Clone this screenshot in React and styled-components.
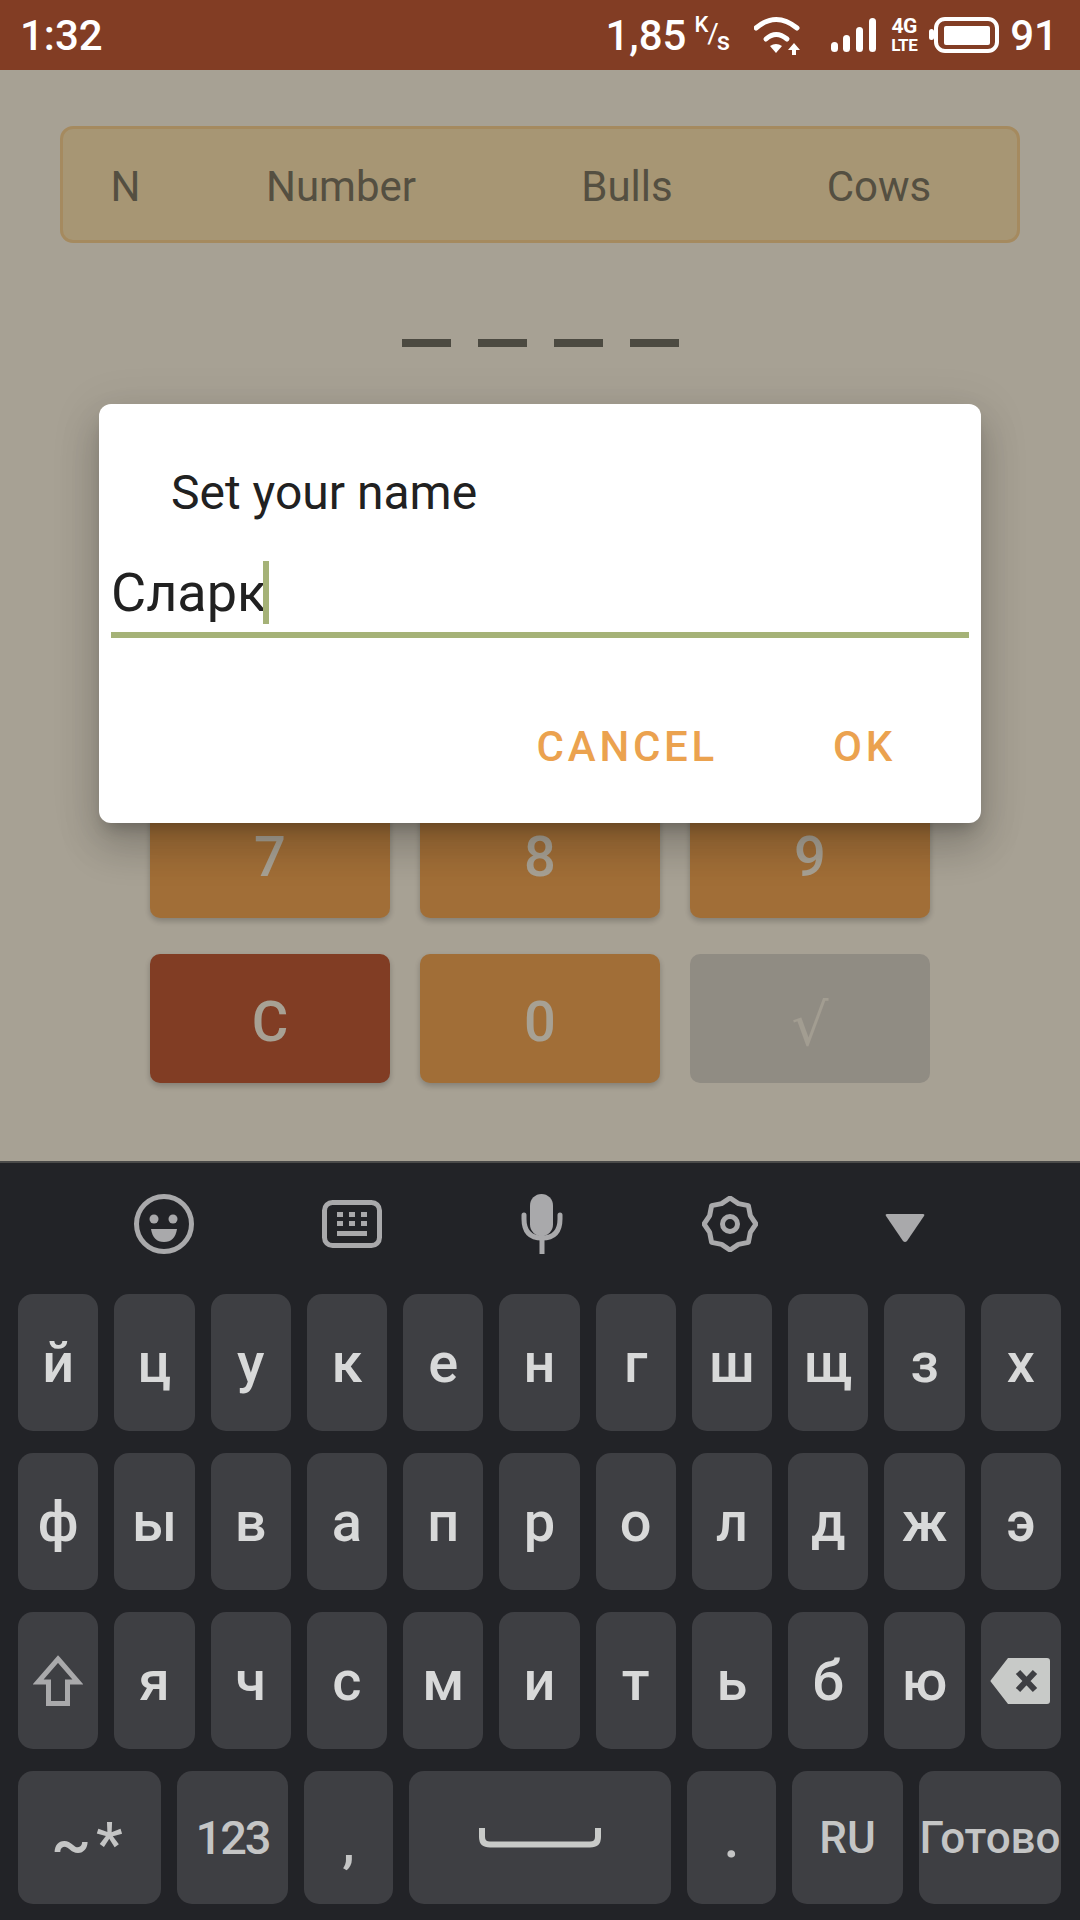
import React from "react";
import styled, { createGlobalStyle } from "styled-components";

const Global = createGlobalStyle`
  html, body { margin: 0; padding: 0; background: #222327; }
  * { box-sizing: border-box; }
  body { font-family: Roboto, "Noto Sans", sans-serif; }
`;

const Screen = styled.div`
  width: 1080px;
  height: 1920px;
  display: flex;
  flex-direction: column;
  overflow: hidden;
`;

/* status bar */
const StatusBar = styled.div`
  height: 70px;
  flex: none;
  background: #823d24;
  color: #fff;
  display: flex;
  align-items: center;
  justify-content: space-between;
  padding: 0 22px 0 20px;
  font-size: 42px;
  font-weight: 500;
`;
const StatusRight = styled.div`
  display: flex;
  align-items: center;
`;
const StatusNum = styled.span`
  line-height: 1;
  margin-top: 1px;
  margin-left: ${(p) => p.$ml || 0}px;
`;
const SpeedUnit = styled.span`
  display: inline-flex;
  align-items: flex-start;
  height: 36px;
  margin: 0 24px 0 8px;
  font-size: 22px;
  font-weight: 500;
  line-height: 1;
`;
const UnitK = styled.span`
  margin-top: -3px;
`;
const UnitSlash = styled.span`
  font-size: 28px;
  font-weight: 400;
  margin: 3px -2px 0 -1px;
`;
const UnitS = styled.span`
  font-size: 26px;
  margin-top: 11px;
`;
const NetType = styled.span`
  display: flex;
  flex-direction: column;
  align-items: center;
  width: 26px;
  margin: 0 12px 0 15px;
  font-weight: 700;
  line-height: 1;
`;
const NetTop = styled.span`
  font-size: 21px;
  height: 21px;
  letter-spacing: -0.5px;
`;
const NetBottom = styled.span`
  font-size: 17px;
  letter-spacing: -0.5px;
`;
const Icon = styled.svg`
  display: block;
  flex: none;
  margin: ${(p) => p.$margin || "0"};
`;

/* game page */
const Page = styled.div`
  position: relative;
  height: 1091px;
  flex: none;
  background: #f7eedb;
  display: flex;
  flex-direction: column;
  align-items: center;
  padding-top: 56px;
`;
const ScoreHeader = styled.div`
  width: 960px;
  height: 117px;
  border: 3px solid #f4cc8c;
  border-radius: 13px;
  background: #f6ddac;
  display: grid;
  grid-template-columns: 125px 306px 266px 238px;
  align-items: center;
  padding-top: 3px;
  font-size: 42px;
  color: #7d7560;
  text-align: center;
`;
const DashRow = styled.div`
  display: flex;
  gap: 27px;
  margin-top: 96px;
`;
const Dash = styled.div`
  width: 49px;
  height: 8px;
  background: #716d61;
`;
const Keypad = styled.div`
  display: grid;
  grid-template-columns: repeat(3, 240px);
  grid-auto-rows: 129px;
  column-gap: 30px;
  row-gap: 36px;
  margin-top: 112px;
`;
const PadKey = styled.div`
  display: flex;
  align-items: center;
  justify-content: center;
  padding-top: 7px;
  border-radius: 10px;
  font-size: 56px;
  font-weight: 500;
  color: #f7eedb;
  background: ${(p) => (p.$kind === "clear" ? "#bf5a35" : p.$kind === "off" ? "#d5cec2" : "#eea351")};
  box-shadow: ${(p) => (p.$kind === "off" ? "none" : "0 3px 6px rgba(0,0,0,.22)")};
`;
const CheckGlyph = styled.span`
  font-family: "Noto Sans", "DejaVu Sans", sans-serif;
  font-weight: 400;
  font-size: 58px;
  color: #efe7d6;
`;

/* dialog */
const Scrim = styled.div`
  position: absolute;
  inset: 0;
  background: rgba(0, 0, 0, 0.32);
  display: flex;
  justify-content: center;
  align-items: flex-start;
  padding-top: 334px;
`;
const Dialog = styled.div`
  width: 882px;
  height: 419px;
  background: #fff;
  border-radius: 12px;
  box-shadow: 0 24px 38px 3px rgba(0, 0, 0, 0.15), 0 9px 46px 8px rgba(0, 0, 0, 0.08), 0 11px 15px -7px rgba(0, 0, 0, 0.22);
  display: flex;
  flex-direction: column;
`;
const DialogTitle = styled.div`
  font-size: 48px;
  line-height: 56px;
  color: #212121;
  padding: 61px 0 0 72px;
`;
const NameField = styled.div`
  height: 77px;
  margin: 40px 12px 0;
  border-bottom: 6px solid #a5b277;
  display: flex;
  align-items: flex-start;
  font-size: 54px;
  line-height: 63px;
  color: #212121;
`;
const FieldText = styled.span`
  display: block;
`;
const Caret = styled.span`
  display: block;
  width: 6px;
  height: 63px;
  background: #a5b277;
  margin-left: -3px;
`;
const DialogActions = styled.div`
  display: flex;
  justify-content: flex-end;
  gap: 115px;
  padding: 85px 85px 0 0;
`;
const ActionButton = styled.div`
  font-size: 42px;
  line-height: 48px;
  font-weight: 500;
  letter-spacing: 3.75px;
  color: #eba24f;
`;

/* keyboard */
const Keyboard = styled.div`
  flex: 1;
  background: #222327;
  border-top: 2px solid #4a4a49;
  padding: 0 19px 0 18px;
`;
const KbToolbar = styled.div`
  height: 131px;
  display: grid;
  grid-template-columns: 189px 199px 181px 183px auto;
  padding: 0 0 9px 115px;
  align-items: center;
  justify-items: start;
`;
const KeyRows = styled.div`
  display: flex;
  flex-direction: column;
  gap: 22px;
`;
const KeyRow = styled.div`
  display: flex;
  gap: 16px;
  height: ${(p) => p.$h || 137}px;
`;
const Key = styled.div`
  flex: ${(p) => (p.$w ? `0 0 ${p.$w}px` : "1 1 0")};
  min-width: 0;
  background: #3e3f43;
  border-radius: 15px;
  display: flex;
  align-items: center;
  justify-content: center;
  padding-top: ${(p) => p.$pt || 0}px;
  font-size: ${(p) => p.$size || 56}px;
  font-weight: ${(p) => p.$weight || 500};
  letter-spacing: ${(p) => p.$ls || 0}px;
  color: ${(p) => p.$color || "#d8d9d9"};
  white-space: nowrap;
`;

const gearPoints = (() => {
  const pts = [];
  for (let i = 0; i < 16; i++) {
    const a = (i * Math.PI) / 8 - Math.PI / 2;
    const r = i % 2 === 0 ? 26 : 22;
    pts.push(`${(28 + r * Math.cos(a)).toFixed(2)},${(28 + r * Math.sin(a)).toFixed(2)}`);
  }
  return pts.join(" ");
})();

const GREY = "#a9a9ab";

const rows = [
  ["й", "ц", "у", "к", "е", "н", "г", "ш", "щ", "з", "х"],
  ["ф", "ы", "в", "а", "п", "р", "о", "л", "д", "ж", "э"],
];
const row3 = ["я", "ч", "с", "м", "и", "т", "ь", "б", "ю"];
const padKeys = [
  ["a"], ["b"], ["d"], ["e"], ["f"], ["g"],
  ["h", null, "7"], ["i", null, "8"], ["j", null, "9"],
  ["k", "clear", "C"], ["l", null, "0"],
];

export default function App() {
  return (
    <Screen>
      <Global />
      <StatusBar>
        <StatusNum>1:32</StatusNum>
        <StatusRight>
          <StatusNum>1,85</StatusNum>
          <SpeedUnit>
            <UnitK>K</UnitK>
            <UnitSlash>/</UnitSlash>
            <UnitS>s</UnitS>
          </SpeedUnit>
          <Icon width="46" height="40" viewBox="0 0 46 40" fill="none">
            <path d="M2 13 Q22 -4 43 13" stroke="#fff" strokeWidth="5" strokeLinecap="round" />
            <path d="M12 24 Q22 15 33 24" stroke="#fff" strokeWidth="5" strokeLinecap="round" />
            <path d="M16 31 Q22 27 28 31 L22 38Z" fill="#fff" />
            <path d="M40 28 l6 7 h-4 v5 h-4 v-5 h-4Z" fill="#fff" />
          </Icon>
          <Icon width="45" height="34" viewBox="0 0 45 34" fill="#fff" $margin="0 0 0 31px">
            <rect x="0" y="24" width="7" height="10" rx="3.5" />
            <rect x="12" y="17" width="7" height="17" rx="3.5" />
            <rect x="25" y="9" width="7" height="25" rx="3.5" />
            <rect x="38" y="0" width="7" height="34" rx="3.5" />
          </Icon>
          <NetType>
            <NetTop>4G</NetTop>
            <NetBottom>LTE</NetBottom>
          </NetType>
          <Icon width="70" height="36" viewBox="0 0 70 36" fill="none">
            <rect x="7" y="2" width="61" height="32" rx="9" stroke="#fff" strokeWidth="4" />
            <rect x="15" y="9" width="46" height="19" rx="2" fill="#fff" />
            <rect x="0" y="12" width="5" height="11" rx="2.5" fill="#fff" />
          </Icon>
          <StatusNum $ml={11}>91</StatusNum>
        </StatusRight>
      </StatusBar>

      <Page>
        <ScoreHeader>
          <span>N</span>
          <span>Number</span>
          <span>Bulls</span>
          <span>Cows</span>
        </ScoreHeader>
        <DashRow>
          <Dash />
          <Dash />
          <Dash />
          <Dash />
        </DashRow>
        <Keypad>
          {padKeys.map(([id, kind, label]) => (
            <PadKey key={id} $kind={kind}>
              {label}
            </PadKey>
          ))}
          <PadKey $kind="off">
            <CheckGlyph>√</CheckGlyph>
          </PadKey>
        </Keypad>
        <Scrim>
          <Dialog>
            <DialogTitle>Set your name</DialogTitle>
            <NameField>
              <FieldText>Сларк</FieldText>
              <Caret />
            </NameField>
            <DialogActions>
              <ActionButton>CANCEL</ActionButton>
              <ActionButton>OK</ActionButton>
            </DialogActions>
          </Dialog>
        </Scrim>
      </Page>

      <Keyboard>
        <KbToolbar>
          <Icon width="62" height="62" viewBox="0 0 62 62">
            <circle cx="31" cy="31" r="27.5" fill="none" stroke={GREY} strokeWidth="5" />
            <circle cx="21" cy="26" r="4.5" fill={GREY} />
            <circle cx="40" cy="26" r="4.5" fill={GREY} />
            <path d="M18 36 H44 Q42 49 31 49 Q20 49 18 36Z" fill={GREY} />
          </Icon>
          <Icon width="60" height="48" viewBox="0 0 60 48">
            <rect x="2.5" y="2.5" width="55" height="43" rx="8" fill="none" stroke={GREY} strokeWidth="5" />
            <g fill={GREY}>
              <rect x="15" y="12" width="6" height="5" />
              <rect x="27" y="12" width="6" height="5" />
              <rect x="39" y="12" width="6" height="5" />
              <rect x="15" y="21" width="6" height="5" />
              <rect x="27" y="21" width="6" height="5" />
              <rect x="39" y="21" width="6" height="5" />
              <rect x="15" y="31" width="30" height="5" />
            </g>
          </Icon>
          <Icon width="42" height="60" viewBox="0 0 42 60">
            <rect x="9" y="0" width="23" height="42" rx="11.5" fill={GREY} />
            <path d="M3 21 V25 Q3 44 21 44 Q39 44 39 25 V21" fill="none" stroke={GREY} strokeWidth="5" strokeLinecap="round" />
            <rect x="18.5" y="44" width="5" height="16" fill={GREY} />
          </Icon>
          <Icon width="56" height="56" viewBox="0 0 56 56">
            <polygon points={gearPoints} fill="none" stroke={GREY} strokeWidth="5" strokeLinejoin="round" />
            <circle cx="28" cy="28" r="7.5" fill="none" stroke={GREY} strokeWidth="5" />
          </Icon>
          <Icon width="40" height="30" viewBox="0 0 40 30" $margin="8px 0 0 0">
            <path d="M2 1 H38 Q40 1 39 3 L22 28 Q20 30 18 28 L1 3 Q0 1 2 1Z" fill={GREY} />
          </Icon>
        </KbToolbar>
        <KeyRows>
          {rows.map((r) => (
            <KeyRow key={r[0]}>
              {r.map((c) => (
                <Key key={c}>{c}</Key>
              ))}
            </KeyRow>
          ))}
          <KeyRow>
            <Key>
              <Icon width="50" height="51" viewBox="0 0 50 51" fill="none">
                <path d="M25 4 L45 27 H34.5 V48.5 H15.5 V27 H5 Z" stroke={GREY} strokeWidth="5" strokeLinejoin="miter" />
              </Icon>
            </Key>
            {row3.map((c) => (
              <Key key={c}>{c}</Key>
            ))}
            <Key>
              <Icon width="60" height="46" viewBox="0 0 60 46" $margin="0 0 0 -2px">
                <path d="M18 0 H57 Q60 0 60 3 V43 Q60 46 57 46 H18 L1 24 Q0 23 1 22Z" fill="#c8cac8" />
                <path d="M28 14 L45 32 M45 14 L28 32" stroke="#3e3f43" strokeWidth="6" />
              </Icon>
            </Key>
          </KeyRow>
          <KeyRow $h={133}>
            <Key $w={143} $size={60} $ls={5} $pt={12} $color="#c4c5c5">~*</Key>
            <Key $w={111} $size={47} $ls={-2} $color="#c4c5c5">123</Key>
            <Key $w={89} $size={56} $pt={8} $color="#c4c5c5">,</Key>
            <Key $w={262}>
              <Icon width="122" height="20" viewBox="0 0 122 20" fill="none">
                <path d="M3 0 V9 Q3 16.5 11 16.5 H111 Q119 16.5 119 9 V0" stroke="#c8cac8" strokeWidth="6" />
              </Icon>
            </Key>
            <Key $w={89} $size={56} $color="#c4c5c5">.</Key>
            <Key $w={111} $size={44} $color="#c4c5c5">RU</Key>
            <Key $w={142} $size={44} $color="#c4c5c5">Готово</Key>
          </KeyRow>
        </KeyRows>
      </Keyboard>
    </Screen>
  );
}
